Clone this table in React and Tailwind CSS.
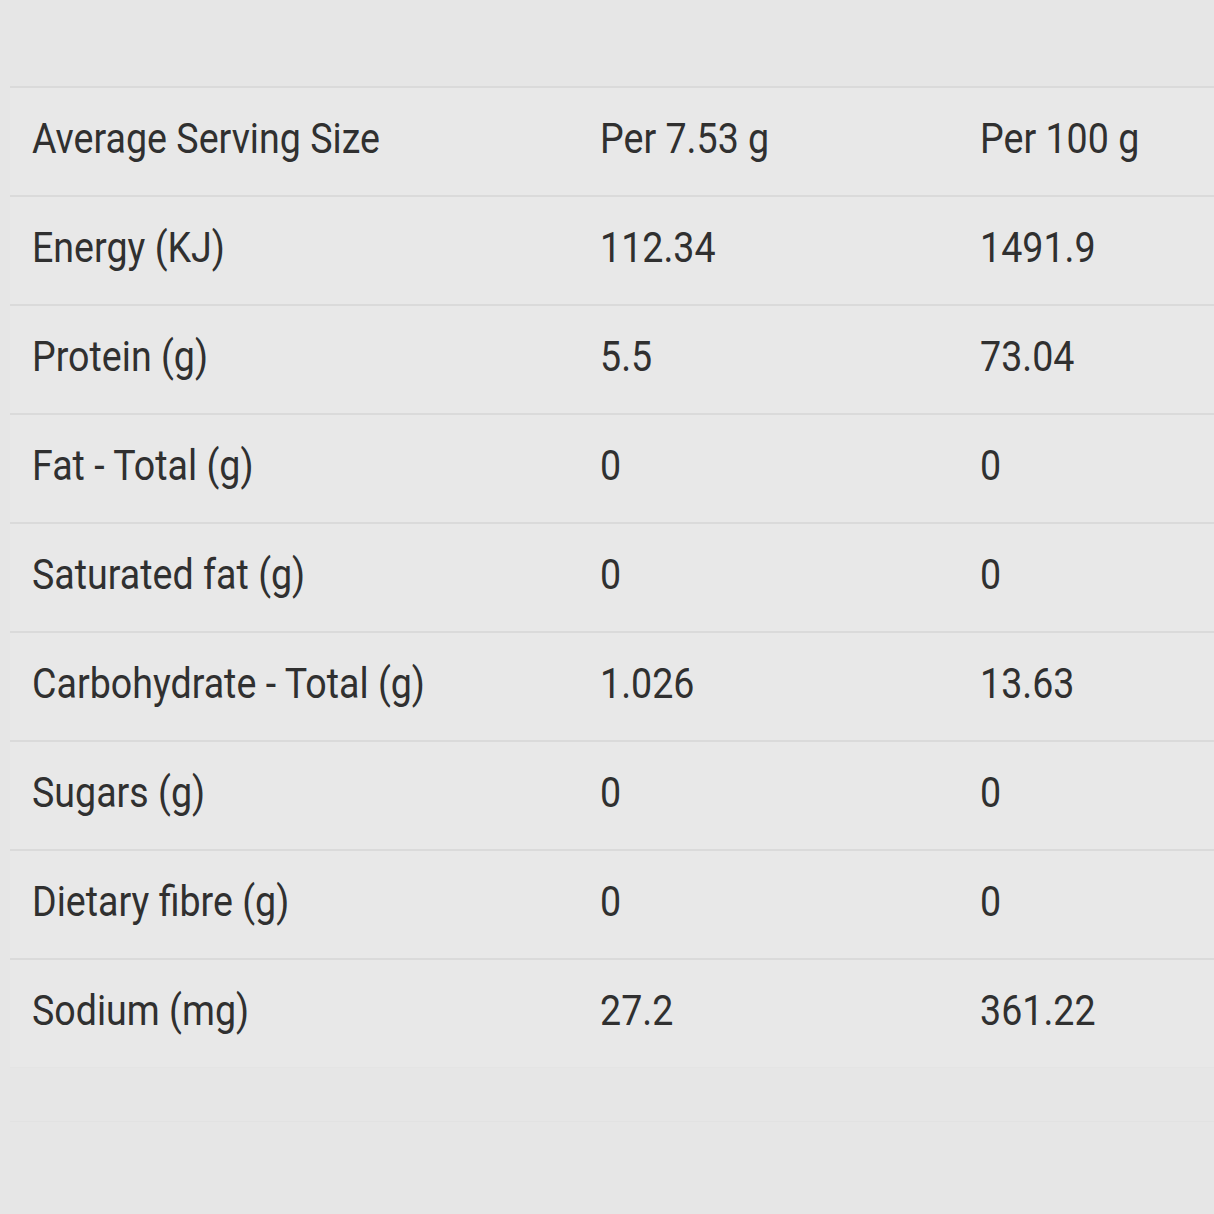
const rows = [
  ["Average Serving Size", "Per 7.53 g", "Per 100 g"],
  ["Energy (KJ)", "112.34", "1491.9"],
  ["Protein (g)", "5.5", "73.04"],
  ["Fat - Total (g)", "0", "0"],
  ["Saturated fat (g)", "0", "0"],
  ["Carbohydrate - Total (g)", "1.026", "13.63"],
  ["Sugars (g)", "0", "0"],
  ["Dietary fibre (g)", "0", "0"],
  ["Sodium (mg)", "27.2", "361.22"],
];

function Cell({ children }) {
  return (
    <div className="flex items-center pb-[5px]">
      <span className="inline-block origin-left scale-x-[0.895] whitespace-nowrap">
        {children}
      </span>
    </div>
  );
}

export default function App() {
  return (
    <div
      className="w-[1214px] h-[1214px] bg-[#e6e6e6] text-[#303030] overflow-hidden"
      style={{ fontFamily: "Roboto, 'Liberation Sans', sans-serif" }}
    >
      <div className="pt-[86px] ml-[10px]">
        {rows.map((r, i) => (
          <div
            key={i}
            className="grid grid-cols-[568px_380px_1fr] h-[109px] pl-[22px] border-t-2 border-[#dadada] text-[42px] leading-none bg-[#e8e8e8]"
          >
            <Cell>{r[0]}</Cell>
            <Cell>{r[1]}</Cell>
            <Cell>{r[2]}</Cell>
          </div>
        ))}
        <div className="h-[54px] border-t border-[#e4e4e4]" />
        <div className="border-t border-[#e2e2e2]" />
      </div>
    </div>
  );
}
